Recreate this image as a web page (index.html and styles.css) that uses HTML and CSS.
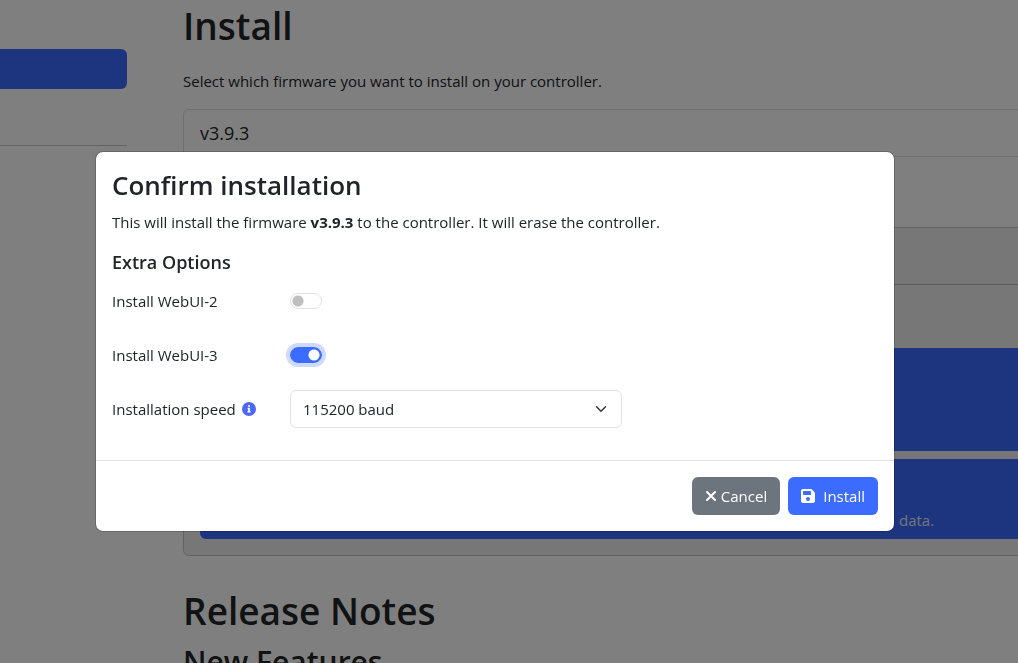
FILE: index.html
```html
<!DOCTYPE html>
<html lang="en">
<head>
    <meta charset="utf-8">
    <title>Install</title>
    <link rel="stylesheet" href="styles.css">
</head>
<body>
    <div class="page">
        <nav class="sidebar">
            <a href="#" class="nav-item active" aria-label="Install"></a>
            <hr>
        </nav>
        <main class="content">
            <h1>Install</h1>
            <p class="lead">Select which firmware you want to install on your controller.</p>

            <div class="card">
                <div class="card-header">v3.9.3</div>
                <div class="card-body"></div>
            </div>
            <div class="card card-dark">
                <div class="card-title"></div>
                <div class="choices">
                    <div class="choice choice-large"></div>
                    <div class="choice"><span>data.</span></div>
                </div>
            </div>

            <h1>Release Notes</h1>
            <h2>New Features</h2>
        </main>
    </div>

    <div class="backdrop">
        <div class="modal" role="dialog" aria-labelledby="modalTitle">
            <div class="modal-body">
                <h3 id="modalTitle">Confirm installation</h3>
                <p>This will install the firmware <b>v3.9.3</b> to the controller. It will erase the controller.</p>
                <h4>Extra Options</h4>
                <div class="options">
                    <label for="webui2">Install WebUI-2</label>
                    <input type="checkbox" class="switch" id="webui2">

                    <label for="webui3">Install WebUI-3</label>
                    <input type="checkbox" class="switch focused" id="webui3" checked>

                    <label for="speed">Installation speed
                        <svg class="info" viewBox="0 0 512 512" aria-hidden="true">
                            <circle cx="256" cy="256" r="256" fill="#4d68f5"/>
                            <circle cx="256" cy="144" r="36" fill="#fff"/>
                            <path fill="#fff" d="M204 210h84v128h28v50H196v-50h28v-78h-20z"/>
                        </svg>
                    </label>
                    <div class="select">
                        <select id="speed">
                            <option>115200 baud</option>
                        </select>
                        <svg viewBox="0 0 16 16" aria-hidden="true">
                            <path d="m2 5 6 6 6-6" fill="none" stroke="#343a40" stroke-width="2" stroke-linecap="round" stroke-linejoin="round"/>
                        </svg>
                    </div>
                </div>
            </div>
            <div class="modal-footer">
                <button type="button" class="btn btn-secondary">
                    <svg class="icon-x" viewBox="0 0 12 12" aria-hidden="true">
                        <path d="M2 2l8 8M10 2l-8 8" stroke="#fff" stroke-width="2" stroke-linecap="round"/>
                    </svg>Cancel
                </button>
                <button type="button" class="btn btn-primary">
                    <svg class="icon-save" viewBox="0 0 448 512" aria-hidden="true">
                        <path fill="#fff" fill-rule="evenodd" d="M64 32C28 32 0 60 0 96v320c0 36 28 64 64 64h320c36 0 64-28 64-64V173c0-17-7-33-19-45l-77-77c-12-12-28-19-45-19H64zm0 96c0-18 14-32 32-32h192c18 0 32 14 32 32v64c0 18-14 32-32 32H96c-18 0-32-14-32-32v-64zm160 160a64 64 0 1 1 0 128 64 64 0 1 1 0-128z"/>
                    </svg>Install
                </button>
            </div>
        </div>
    </div>
</body>
</html>
```
FILE: styles.css
```css
* { box-sizing: border-box; }
body { margin: 0; height: 100vh; overflow: hidden; background: #fff; color: #212529; font: 15px/24px "Segoe UI", "Open Sans", "Noto Sans", sans-serif; }
h1, h2, h3, h4, p { margin: 0; }
h1, h2, h3, h4 { font-weight: 600; }
h1 { font-size: 37px; line-height: 48px; margin-bottom: 8px; }
h2 { font-size: 30px; line-height: 38px; }
h3 { font-size: 26px; line-height: 34px; margin-bottom: 8px; }
h4 { font-size: 18px; line-height: 24px; margin-bottom: 8px; }

/* page behind the dialog */
.page { display: flex; gap: 56px; height: 100%; overflow: hidden; }
.sidebar { width: 127px; padding-top: 49px; }
.nav-item { display: block; height: 40px; border-radius: 0 6px 6px 0; }
.nav-item.active { background: #3b6bff; }
.sidebar hr { margin: 56px 0 0; border: 0; border-top: 1px solid #c8c9ca; }
.content { flex: 1; min-width: 0; padding-top: 2px; }
.lead { margin: 19px 0 16px; }
.card { margin-right: -16px; border: 1px solid #dfdfdf; border-radius: 6px 6px 0 0; }
.card-header { padding: 11px 16px; font-size: 18px; border-bottom: 1px solid #dfdfdf; }
.card-body { height: 70px; }
.card-dark { margin-top: -1px; margin-bottom: 31px; background: #efefef; border-color: #c5c5c5; border-radius: 0 0 6px 6px; }
.card-title { height: 57px; border-bottom: 1px solid #b4b4b4; }
.choices { display: flex; flex-direction: column; gap: 8px; padding: 63px 16px 16px; }
.choice { height: 80px; padding: 49px 0 0 699px; margin-right: -16px; background: #3b6bff; color: #fff; border-radius: 6px; }
.choice span { opacity: 0.85; }
.choice-large { height: 103px; }

/* dialog */
.backdrop { position: fixed; inset: 0; display: flex; justify-content: center; align-items: flex-start; padding: 151px 28px 0 0; background: rgba(0, 0, 0, 0.5); }
.modal { width: 100%; max-width: 800px; background: #fff; background-clip: padding-box; border: 1px solid rgba(0, 0, 0, 0.18); border-radius: 8px; }
.modal-body { padding: 16px 16px 32px; }
.modal-body p { margin-bottom: 16px; }
.options { display: grid; grid-template-columns: 178px minmax(0, 332px); grid-auto-rows: 38px; row-gap: 16px; align-items: center; }
.options label { display: flex; align-items: center; gap: 6px; }
.info { width: 14px; height: 14px; }

.switch { appearance: none; width: 32px; height: 16px; margin: 0; border: 1px solid #dee2e6; border-radius: 8px; background: radial-gradient(circle at 7px 7px, #bfbfbf 5px, transparent 6px); }
.switch:checked { border-color: #3b6bff; background: radial-gradient(circle at 23px 7px, #fff 5px, #3b6bff 6px); }
.switch.focused { box-shadow: 0 0 0 4px #ced9ff; }

.select { position: relative; }
.select select { appearance: none; display: block; width: 100%; height: 38px; padding: 0 36px 0 12px; border: 1px solid #dee2e6; border-radius: 6px; background: #fff; color: #212529; font: inherit; }
.select svg { position: absolute; right: 15px; top: 13px; width: 12px; height: 12px; pointer-events: none; }

.modal-footer { display: flex; justify-content: flex-end; gap: 8px; padding: 16px; border-top: 1px solid #dee2e6; }
.btn { display: flex; align-items: center; height: 38px; padding: 0 13px; border: 0; border-radius: 6px; color: #fff; font: inherit; cursor: pointer; }
.btn-secondary { background: #6c757d; }
.btn-primary { background: #3b6bff; }
.icon-x { width: 12px; height: 12px; margin-right: 4px; }
.icon-save { width: 14px; height: 16px; margin-right: 8px; }
```
